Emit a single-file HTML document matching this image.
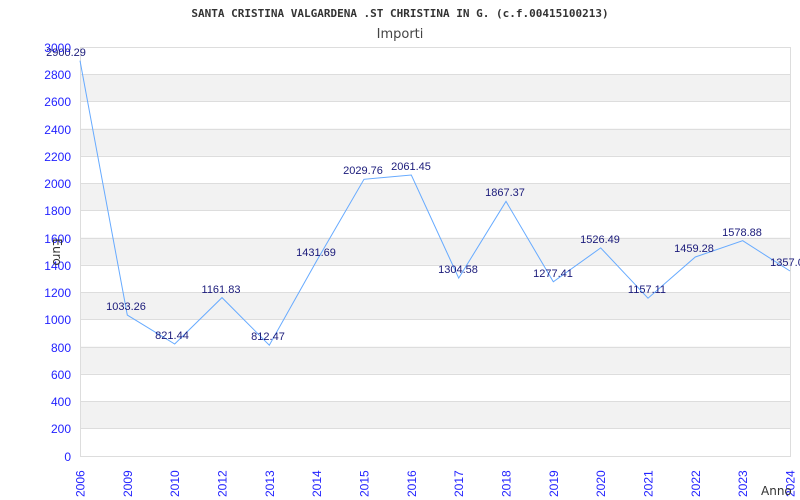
<!DOCTYPE html>
<html><head><meta charset="utf-8"><style>
html,body{margin:0;padding:0;background:#fff;width:800px;height:500px;overflow:hidden}
svg text{font-family:"Liberation Sans",sans-serif}
</style></head><body>
<svg width="800" height="500" xmlns="http://www.w3.org/2000/svg">
<text x="400" y="17" text-anchor="middle" style="font-family:'DejaVu Sans Mono',monospace" font-size="11" font-weight="bold" fill="#333">SANTA CRISTINA VALGARDENA .ST CHRISTINA IN G. (c.f.00415100213)</text>
<text x="400" y="38" text-anchor="middle" style="font-family:'DejaVu Sans',sans-serif" font-size="13" fill="#444">Importi</text>
<g fill="#f2f2f2">
<rect x="80" y="74" width="710" height="27.3"/>
<rect x="80" y="128.5" width="710" height="27.3"/>
<rect x="80" y="183" width="710" height="27.3"/>
<rect x="80" y="237.5" width="710" height="27.3"/>
<rect x="80" y="292" width="710" height="27.3"/>
<rect x="80" y="346.5" width="710" height="27.3"/>
<rect x="80" y="401" width="710" height="27.3"/>
</g>
<g stroke="#ddd" stroke-width="1">
<line x1="80" y1="47.5" x2="790" y2="47.5"/><line x1="80" y1="74.5" x2="790" y2="74.5"/><line x1="80" y1="101.5" x2="790" y2="101.5"/><line x1="80" y1="129.5" x2="790" y2="129.5"/><line x1="80" y1="156.5" x2="790" y2="156.5"/><line x1="80" y1="183.5" x2="790" y2="183.5"/><line x1="80" y1="210.5" x2="790" y2="210.5"/><line x1="80" y1="238.5" x2="790" y2="238.5"/><line x1="80" y1="265.5" x2="790" y2="265.5"/><line x1="80" y1="292.5" x2="790" y2="292.5"/><line x1="80" y1="319.5" x2="790" y2="319.5"/><line x1="80" y1="347.5" x2="790" y2="347.5"/><line x1="80" y1="374.5" x2="790" y2="374.5"/><line x1="80" y1="401.5" x2="790" y2="401.5"/><line x1="80" y1="428.5" x2="790" y2="428.5"/><line x1="80" y1="456.5" x2="790" y2="456.5"/>
<line x1="80.5" y1="47" x2="80.5" y2="457"/><line x1="790.5" y1="47" x2="790.5" y2="457"/>
</g>
<g fill="#2222ff" font-size="12" text-anchor="end">
<text x="71" y="52">3000</text><text x="71" y="79">2800</text><text x="71" y="106">2600</text><text x="71" y="134">2400</text><text x="71" y="161">2200</text><text x="71" y="188">2000</text>
<text x="71" y="215">1800</text><text x="71" y="243">1600</text><text x="71" y="270">1400</text><text x="71" y="297">1200</text><text x="71" y="324">1000</text><text x="71" y="352">800</text><text x="71" y="379">600</text><text x="71" y="406">400</text><text x="71" y="433">200</text><text x="71" y="461">0</text>
</g>
<text x="53" y="252" transform="rotate(90 53 252)" text-anchor="middle" style="font-family:'DejaVu Sans',sans-serif" font-size="12" fill="#333">Euro</text>
<g fill="#2222ff" font-size="12" style="font-family:'DejaVu Sans',sans-serif">
<text transform="translate(84.5,497) rotate(-90)">2006</text>
<text transform="translate(131.8,497) rotate(-90)">2009</text>
<text transform="translate(179.2,497) rotate(-90)">2010</text>
<text transform="translate(226.5,497) rotate(-90)">2012</text>
<text transform="translate(273.8,497) rotate(-90)">2013</text>
<text transform="translate(321.2,497) rotate(-90)">2014</text>
<text transform="translate(368.5,497) rotate(-90)">2015</text>
<text transform="translate(415.8,497) rotate(-90)">2016</text>
<text transform="translate(463.2,497) rotate(-90)">2017</text>
<text transform="translate(510.5,497) rotate(-90)">2018</text>
<text transform="translate(557.8,497) rotate(-90)">2019</text>
<text transform="translate(605.2,497) rotate(-90)">2020</text>
<text transform="translate(652.5,497) rotate(-90)">2021</text>
<text transform="translate(699.8,497) rotate(-90)">2022</text>
<text transform="translate(747.2,497) rotate(-90)">2023</text>
<text transform="translate(794.5,497) rotate(-90)">2024</text>
</g>
<text x="761" y="495" style="font-family:'DejaVu Sans',sans-serif" font-size="12" fill="#333">Anno</text>
<polyline fill="none" stroke="#66aaff" stroke-width="1" points="80,60.6 127.3,315.1 174.7,344 222,297.6 269.3,345.2 316.7,260.8 364,179.3 411.3,175 458.7,278.1 506,201.4 553.3,281.8 600.7,247.9 648,298.2 695.3,257 742.7,240.7 790,271"/>
<g fill="#1a1a7a" font-size="11" text-anchor="middle">
<text x="66" y="56">2900.29</text>
<text x="126" y="310">1033.26</text>
<text x="172" y="339">821.44</text>
<text x="221" y="293">1161.83</text>
<text x="268" y="340">812.47</text>
<text x="316" y="256">1431.69</text>
<text x="363" y="174">2029.76</text>
<text x="411" y="170">2061.45</text>
<text x="458" y="273">1304.58</text>
<text x="505" y="196">1867.37</text>
<text x="553" y="277">1277.41</text>
<text x="600" y="243">1526.49</text>
<text x="647" y="293">1157.11</text>
<text x="694" y="252">1459.28</text>
<text x="742" y="236">1578.88</text>
<text x="787" y="266">1357.0</text>
</g>
</svg>
</body></html>
